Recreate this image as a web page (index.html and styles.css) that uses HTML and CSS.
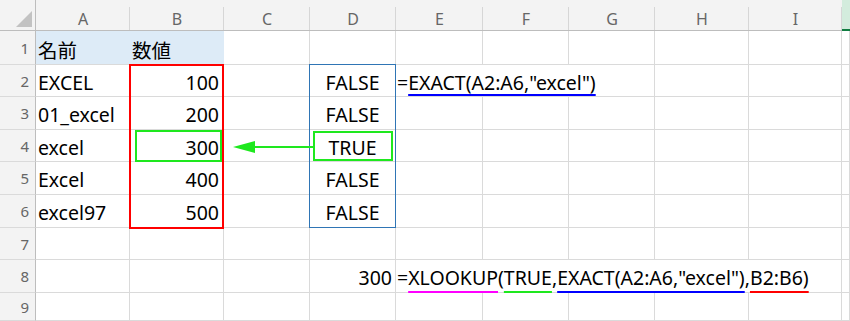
FILE: index.html
```html
<!DOCTYPE html>
<html lang="ja">
<head>
<meta charset="utf-8">
<title>EXACT XLOOKUP</title>
<link rel="stylesheet" href="styles.css">
</head>
<body>
<div class="sheet">
  <div class="corner"><svg class="tri" width="16" height="16" viewBox="0 0 16 16"><polygon points="16,0 16,16 0,16" fill="#c2c2c2"/></svg></div>
  <div class="ch">A</div><div class="ch">B</div><div class="ch">C</div><div class="ch">D</div><div class="ch">E</div><div class="ch">F</div><div class="ch">G</div><div class="ch">H</div><div class="ch">I</div><div class="ch sel"></div>

  <div class="rh">1</div>
  <div class="c fill">名前</div><div class="c fill">数値</div><div class="c"></div><div class="c"></div><div class="c"></div><div class="c"></div><div class="c"></div><div class="c"></div><div class="c"></div><div class="c"></div>

  <div class="rh">2</div>
  <div class="c">EXCEL</div><div class="c num">100</div><div class="c"></div><div class="c ctr">FALSE</div><div class="c fx span3">=<span class="u ub o4">EXACT(A2:A6,"excel")</span></div><div class="c"></div><div class="c"></div><div class="c"></div>

  <div class="rh">3</div>
  <div class="c">01_excel</div><div class="c num">200</div><div class="c"></div><div class="c ctr">FALSE</div><div class="c"></div><div class="c"></div><div class="c"></div><div class="c"></div><div class="c"></div><div class="c"></div>

  <div class="rh">4</div>
  <div class="c">excel</div><div class="c num">300</div><div class="c"></div><div class="c ctr">TRUE</div><div class="c"></div><div class="c"></div><div class="c"></div><div class="c"></div><div class="c"></div><div class="c"></div>

  <div class="rh">5</div>
  <div class="c">Excel</div><div class="c num">400</div><div class="c"></div><div class="c ctr">FALSE</div><div class="c"></div><div class="c"></div><div class="c"></div><div class="c"></div><div class="c"></div><div class="c"></div>

  <div class="rh">6</div>
  <div class="c">excel97</div><div class="c num">500</div><div class="c"></div><div class="c ctr">FALSE</div><div class="c"></div><div class="c"></div><div class="c"></div><div class="c"></div><div class="c"></div><div class="c"></div>

  <div class="rh">7</div>
  <div class="c"></div><div class="c"></div><div class="c"></div><div class="c"></div><div class="c"></div><div class="c"></div><div class="c"></div><div class="c"></div><div class="c"></div><div class="c"></div>

  <div class="rh">8</div>
  <div class="c"></div><div class="c"></div><div class="c"></div><div class="c num numd">300</div><div class="c fx span5">=<span class="u um o6">XLOOKUP</span>(<span class="u ug o6">TRUE</span>,<span class="u ub o6">EXACT(A2:A6,"excel")</span>,<span class="u ur o6">B2:B6)</span></div><div class="c"></div>

  <div class="rh">9</div>
  <div class="c"></div><div class="c"></div><div class="c"></div><div class="c"></div><div class="c"></div><div class="c"></div><div class="c"></div><div class="c"></div><div class="c"></div><div class="c"></div>

  <div class="box red"></div>
  <div class="box blue"></div>
  <div class="box gb"></div>
  <div class="box gd"></div>
  <svg class="box arrow" width="80" height="32" viewBox="0 0 80 32">
    <line x1="18" y1="17" x2="80" y2="17" stroke="#1ee81e" stroke-width="2"/>
    <polygon points="0,17 22,11 22,23" fill="#1ee81e"/>
  </svg>
</div>
</body>
</html>
```

FILE: styles.css
```css
* { box-sizing: border-box; }
html, body { margin: 0; background: #fff; }
body { width: 850px; height: 321px; overflow: hidden; }

.sheet {
  position: relative;
  display: grid;
  grid-template-columns: 36px 94px 94px 86px 86px 87px 86px 86px 94px 93px 8px;
  grid-template-rows: 31px 34px 32px 33px 32px 33px 33px 32px 33px 28px;
  font-family: "Noto Sans", "Noto Sans CJK JP", sans-serif;
}

.corner {
  background: #f3f3f3;
  border-right: 1px solid #bdbdbd;
  border-bottom: 1px solid #bdbdbd;
  display: flex;
  align-items: flex-end;
  justify-content: flex-end;
  padding: 0 3px 3px 0;
}
.tri { display: block; }

.ch {
  background: #f3f3f3 linear-gradient(#d6d6d6, #d6d6d6) no-repeat right bottom / 1px calc(100% - 7px);
  border-bottom: 1px solid #bdbdbd;
  display: flex;
  align-items: flex-end;
  justify-content: center;
  font-size: 16px;
  line-height: 22px;
  color: #666;
}
.ch.sel {
  background: #d3ecdd;
  border-bottom: 2px solid #107c41;
}

.rh {
  background: #f3f3f3;
  border-right: 1px solid #bdbdbd;
  border-bottom: 1px solid #dadada;
  display: flex;
  align-items: center;
  justify-content: flex-end;
  padding-right: 6px;
  font-size: 15px;
  color: #666;
}

.c {
  border-right: 1px solid #dadada;
  border-bottom: 1px solid #dadada;
  display: flex;
  align-items: center;
  padding: 3px 2px 0;
  font-size: 19.5px;
  color: #000;
  white-space: nowrap;
}
.num { justify-content: flex-end; padding-right: 4px; }
.numd { padding-right: 3px; }
.ctr { justify-content: center; }
.fill { background: #ddebf7; border-right-color: #ddebf7; }
.fx { padding-left: 1px; }
.span3 { grid-column: span 3; }
.span5 { grid-column: span 5; }

.u {
  text-decoration-line: underline;
  text-decoration-thickness: 2px;
  text-decoration-skip-ink: none;
}
.o4 { text-underline-offset: 4px; }
.o6 { text-underline-offset: 6px; }
.ub { text-decoration-color: #0000ff; }
.um { text-decoration-color: #ff00ff; }
.ug { text-decoration-color: #1ee81e; }
.ur { text-decoration-color: #ff0000; }

.box { position: absolute; pointer-events: none; }
.red {
  grid-column: 3 / 4;
  grid-row: 3 / 8;
  top: -1px; left: -1px; right: 0; bottom: -1px;
  border: 2px solid #ff0000;
}
.blue {
  grid-column: 5 / 6;
  grid-row: 3 / 8;
  top: -1px; left: -1px; right: 0; bottom: 0;
  border: 1px solid #2f75b5;
}
.gb {
  grid-column: 3 / 4;
  grid-row: 5 / 6;
  top: 0; left: 5px; right: 2px; bottom: 0;
  border: 2px solid #1ee81e;
}
.gd {
  grid-column: 5 / 6;
  grid-row: 5 / 6;
  top: 1px; left: 3px; right: 3px; bottom: 1px;
  border: 2px solid #1ee81e;
}
.arrow {
  grid-column: 4 / 5;
  grid-row: 5 / 6;
  top: 0;
  left: 9px;
}
```
